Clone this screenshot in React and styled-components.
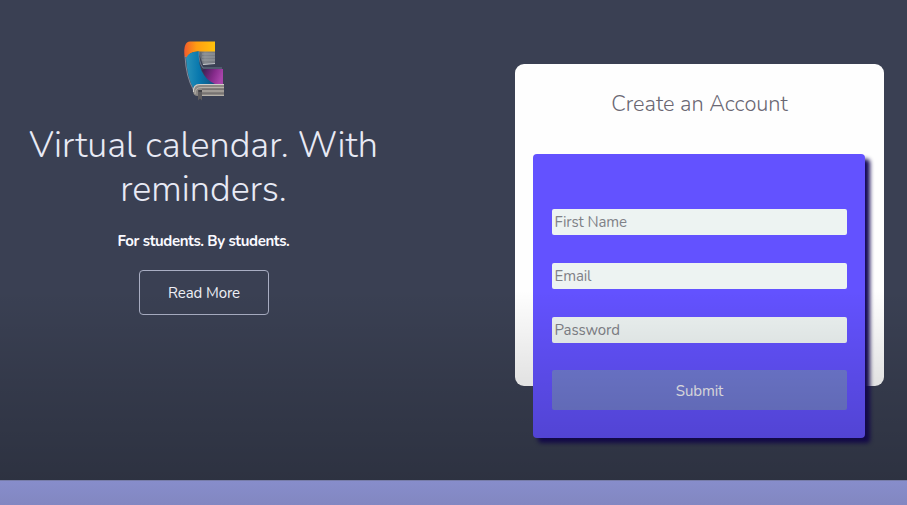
import React from "react";
import styled, { createGlobalStyle } from "styled-components";

const Global = createGlobalStyle`
  *, *::before, *::after { box-sizing: border-box; }
  body { margin: 0; overflow: hidden; background: #868bc6; font-family: "Nunito", "Open Sans", sans-serif; }
  h1, h2, p { margin: 0; }
`;

const Page = styled.div`
  height: 505px;
  display: flex;
  flex-direction: column;
  overflow: hidden;
`;

const Hero = styled.main`
  position: relative;
  height: 480px;
  display: flex;
  justify-content: space-between;
  align-items: flex-start;
  padding-right: 23px;
  background: #3a4053;
  &::after {
    content: "";
    position: absolute;
    inset: 290px 0 0;
    background: linear-gradient(rgba(0, 0, 0, 0), rgba(0, 0, 0, 0.22));
    pointer-events: none;
  }
`;

const NextSection = styled.div`
  height: 25px;
  background: linear-gradient(#878dcb, #8287c1);
  border-top: 1px solid #777ca8;
`;

const Intro = styled.section`
  width: 407px;
  padding-top: 38px;
  display: flex;
  flex-direction: column;
  align-items: center;
  text-align: center;
  color: #f0f1f8;
`;

const Logo = styled.svg`
  width: 44px;
  height: 64px;
`;

const Headline = styled.h1`
  margin-top: 22px;
  width: 360px;
  font-size: 36px;
  font-weight: 285;
  line-height: 44.4px;
  color: #e8eaf5;
`;

const Tagline = styled.p`
  margin-top: 17.2px;
  font-size: 15px;
  font-weight: 700;
  line-height: 22px;
  letter-spacing: -0.38px;
  color: #fafaff;
`;

const ReadMore = styled.button`
  margin-top: 18px;
  width: 130px;
  height: 45px;
  padding: 0 0 0 1px;
  border: 1px solid #a9aec3;
  border-radius: 4px;
  background: transparent;
  color: #eff0f7;
  font-family: inherit;
  font-size: 15px;
  letter-spacing: -0.1px;
`;

const Card = styled.section`
  width: 369px;
  height: 322px;
  margin-top: 63.5px;
  padding: 24.5px 18px 0;
  border-radius: 9px;
  background: #fefefe;
`;

const CardTitle = styled.h2`
  height: 32px;
  text-align: center;
  font-size: 21.8px;
  font-weight: 290;
  line-height: 32px;
  color: #6a6773;
`;

const Form = styled.form`
  width: 332px;
  height: 284px;
  margin-top: 34px;
  padding: 55px 18px 0 19px;
  display: flex;
  flex-direction: column;
  gap: 28px;
  border-radius: 4px;
  background: #6352ff;
  box-shadow: 5px 5px 4px #160b55;
`;

const Field = styled.input`
  width: 295px;
  height: 26px;
  flex: none;
  padding: 0 2.5px;
  border: 0;
  border-radius: 2px;
  background: #edf3f2;
  font-family: inherit;
  font-size: 15px;
  letter-spacing: -0.1px;
  &::placeholder { color: #7f8187; opacity: 1; }
`;

const Submit = styled.button`
  width: 295px;
  height: 40px;
  margin-top: -1px;
  flex: none;
  padding: 2px 0 0;
  border: 0;
  border-radius: 2px;
  background: #717bd4;
  color: #f1f1f6;
  font-family: inherit;
  font-size: 15px;
  letter-spacing: -0.1px;
`;

const fields = [
  ["First Name", "text"],
  ["Email", "email"],
  ["Password", "password"],
];

function BookLogo() {
  return (
    <Logo viewBox="0 0 44 64" aria-label="Book logo">
      <defs>
        <linearGradient id="cover" x1="0" y1="0" x2="1" y2="0">
          <stop stopColor="#f15b2c" />
          <stop offset=".4" stopColor="#ff9d12" />
          <stop offset="1" stopColor="#ffc20b" />
        </linearGradient>
        <linearGradient id="spine" x1="0" y1="0" x2="1" y2="0">
          <stop stopColor="#2a92b8" />
          <stop offset=".45" stopColor="#0878ae" />
          <stop offset="1" stopColor="#12507e" />
        </linearGradient>
        <linearGradient id="back" x1="0" y1="0" x2="1" y2=".3">
          <stop stopColor="#35204c" />
          <stop offset=".6" stopColor="#852a8a" />
          <stop offset="1" stopColor="#a844aa" />
        </linearGradient>
        <linearGradient id="pages" x1="0" y1="0" x2="1" y2="0">
          <stop stopColor="#4f5662" />
          <stop offset=".4" stopColor="#85898e" />
          <stop offset="1" stopColor="#777b82" />
        </linearGradient>
      </defs>
      <path d="M16 13H33V25L21 27Z" fill="url(#pages)" />
      <path d="M20 16H33M20 19H33M20 22H33" stroke="#a5a7aa" strokeWidth=".7" />
      <path d="M21 26.5L33 25.5" stroke="#c4c7cc" strokeWidth="1" />
      <path d="M2.5 18Q1 4 8 3.5H33V13.5H17Q7 13 5 20Z" fill="url(#cover)" />
      <path d="M20 32Q21 31 24 31H41V46H27Z" fill="url(#back)" />
      <path d="M4 20Q7 13 17 13.5Q16 29 22 37Q26 43 33 46H18Q13 47 12 52Q5 39 4 20Z" fill="url(#spine)" />
      <path d="M17 13.5Q16.5 24 21 30H40" stroke="#8c9eb4" strokeWidth=".6" fill="none" />
      <path d="M3 18Q4 39 11.5 52" stroke="#a3abb9" strokeWidth=".7" fill="none" />
      <path d="M11 53Q11 46 17 46H42V58H16Q11 58 11 53Z" fill="#8c8884" />
      <path d="M11.5 54Q11 46.5 18 46.5H42" stroke="#d1cec9" strokeWidth="1.1" fill="none" />
      <path d="M13 56Q13 49.5 19 49.5H42M20 53H42M20 57.5H42" stroke="#bbb5ae" strokeWidth=".9" fill="none" />
      <path d="M20 51.2H42M20 55.2H42" stroke="#625f60" strokeWidth=".7" />
      <path d="M16 52H20V62.5L18 60.5L16 62.5Z" fill="#5e5c5e" />
      <path d="M16.5 53H20" stroke="#28292f" strokeWidth="1" />
    </Logo>
  );
}

export default function App() {
  return (
    <Page>
      <Global />
      <Hero>
        <Intro>
          <BookLogo />
          <Headline>Virtual calendar. With reminders.</Headline>
          <Tagline>For students. By students.</Tagline>
          <ReadMore>Read More</ReadMore>
        </Intro>
        <Card>
          <CardTitle>Create an Account</CardTitle>
          <Form>
            {fields.map(([label, type]) => (
              <Field key={label} type={type} placeholder={label} />
            ))}
            <Submit type="button">Submit</Submit>
          </Form>
        </Card>
      </Hero>
      <NextSection />
    </Page>
  );
}
